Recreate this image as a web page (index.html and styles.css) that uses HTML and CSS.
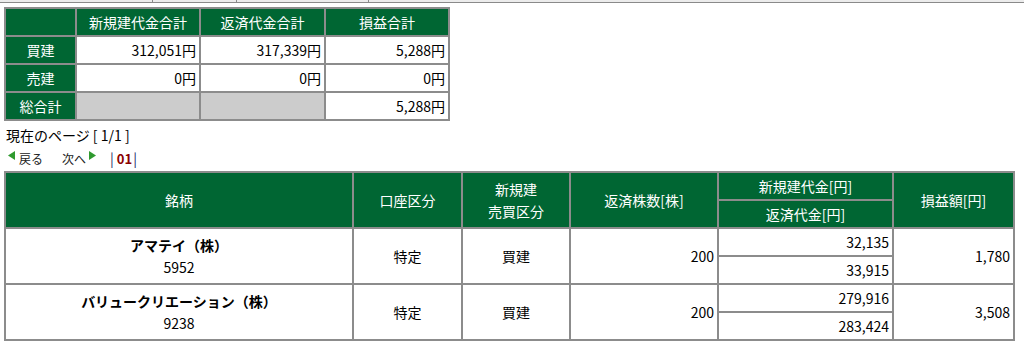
FILE: index.html
```html
<!DOCTYPE html>
<html lang="ja">
<head>
<meta charset="utf-8">
<link rel="stylesheet" href="styles.css">
</head>
<body>
<div class="prev-strip">
  <div class="ps-cell ps1"></div>
  <div class="ps-cell ps2"></div>
  <div class="ps-cell ps3"></div>
  <div class="ps-cell ps4"></div>
</div>
<div class="page">
  <table class="summary">
    <colgroup>
      <col class="s-c1"><col class="s-c2"><col class="s-c3"><col class="s-c4">
    </colgroup>
    <tr>
      <th class="hd"></th>
      <th class="hd">新規建代金合計</th>
      <th class="hd">返済代金合計</th>
      <th class="hd">損益合計</th>
    </tr>
    <tr>
      <th class="hd">買建</th>
      <td class="num">312,051円</td>
      <td class="num">317,339円</td>
      <td class="num">5,288円</td>
    </tr>
    <tr>
      <th class="hd">売建</th>
      <td class="num">0円</td>
      <td class="num">0円</td>
      <td class="num">0円</td>
    </tr>
    <tr>
      <th class="hd">総合計</th>
      <td class="blank"></td>
      <td class="blank"></td>
      <td class="num">5,288円</td>
    </tr>
  </table>

  <div class="pageinfo">現在のページ [ 1/1 ]</div>
  <div class="nav">
    <span class="navlink"><svg class="tri" width="7" height="9" viewBox="0 0 7 9"><polygon points="7,0 7,9 0,4.5" fill="#2f9a2f"/></svg>戻る</span>
    <span class="navlink next">次へ<svg class="tri" width="7" height="9" viewBox="0 0 7 9"><polygon points="0,0 0,9 7,4.5" fill="#2f9a2f"/></svg></span>
    <span class="pages"><span class="bar">|</span><span class="cur">01</span><span class="bar">|</span></span>
  </div>

  <table class="detail">
    <colgroup>
      <col class="d-c1"><col class="d-c2"><col class="d-c3"><col class="d-c4"><col class="d-c5"><col class="d-c6">
    </colgroup>
    <tr>
      <th class="hd" rowspan="2">銘柄</th>
      <th class="hd" rowspan="2">口座区分</th>
      <th class="hd" rowspan="2">新規建<br>売買区分</th>
      <th class="hd" rowspan="2">返済株数[株]</th>
      <th class="hd">新規建代金[円]</th>
      <th class="hd" rowspan="2">損益額[円]</th>
    </tr>
    <tr>
      <th class="hd">返済代金[円]</th>
    </tr>
    <tr>
      <td class="ctr" rowspan="2"><b>アマテイ（株）</b><br>5952</td>
      <td class="ctr" rowspan="2">特定</td>
      <td class="ctr" rowspan="2">買建</td>
      <td class="num" rowspan="2">200</td>
      <td class="num">32,135</td>
      <td class="num" rowspan="2">1,780</td>
    </tr>
    <tr>
      <td class="num">33,915</td>
    </tr>
    <tr>
      <td class="ctr" rowspan="2"><b>バリュークリエーション（株）</b><br>9238</td>
      <td class="ctr" rowspan="2">特定</td>
      <td class="ctr" rowspan="2">買建</td>
      <td class="num" rowspan="2">200</td>
      <td class="num">279,916</td>
      <td class="num" rowspan="2">3,508</td>
    </tr>
    <tr>
      <td class="num">283,424</td>
    </tr>
  </table>
</div>
</body>
</html>
```

FILE: styles.css
```css
html, body {
  margin: 0;
  padding: 0;
  background: #fff;
}
body {
  font-family: "Noto Sans CJK JP", "Noto Sans", sans-serif;
  font-size: 14px;
  color: #000;
}
.prev-strip {
  display: flex;
  height: 2px;
  background: #ececec;
  border-bottom: 1px solid #8a8a8a;
}
.ps-cell {
  border-right: 1px solid #8a8a8a;
}
.ps1 { width: 152px; }
.ps2 { width: 83px; }
.ps3 { width: 131px; }
.ps4 { flex: 1; border-right: none; }

.page {
  padding: 4px 4px 0 4px;
}
table {
  border-collapse: separate;
  border-spacing: 0;
  table-layout: fixed;
  border: 1px solid #8c8c8c;
}
th, td {
  box-sizing: border-box;
  border: 1px solid #8c8c8c;
  height: 28px;
  padding: 0 3px;
  line-height: 22px;
  font-weight: normal;
}
.hd {
  background: #006633;
  color: #fff;
  text-align: center;
}
.num {
  text-align: right;
  background: #fff;
}
.ctr {
  text-align: center;
  background: #fff;
}
.blank {
  background: #cccccc;
}
.summary {
  width: 446px;
}
.s-c1 { width: 71px; }
.s-c2 { width: 124px; }
.s-c3 { width: 125px; }
.s-c4 { width: 124px; }

.pageinfo {
  margin-top: 3px;
  padding-left: 2px;
  line-height: 22px;
  height: 22px;
}
.nav {
  display: flex;
  align-items: flex-end;
  height: 22px;
  padding-left: 4px;
  font-size: 12px;
  line-height: 18px;
  color: #222;
}
.navlink {
  display: inline-flex;
  align-items: flex-start;
}
.tri {
  margin-top: 1px;
}
.navlink .tri:first-child {
  margin-right: 4px;
}
.next {
  margin-left: 19px;
}
.next .tri {
  margin-left: 3px;
}
.pages {
  margin-left: 10px;
  font-size: 14px;
  line-height: 18px;
}
.bar {
  color: #1a2a66;
}
.cur {
  color: #8b0000;
  font-weight: bold;
  font-size: 13px;
  margin: 0 1px 0 3px;
}

.detail {
  margin-top: 3px;
  width: 1011px;
}
.d-c1 { width: 348px; }
.d-c2 { width: 109px; }
.d-c3 { width: 108px; }
.d-c4 { width: 148px; }
.d-c5 { width: 175px; }
.d-c6 { width: 121px; }
.detail b {
  font-weight: bold;
}
```
